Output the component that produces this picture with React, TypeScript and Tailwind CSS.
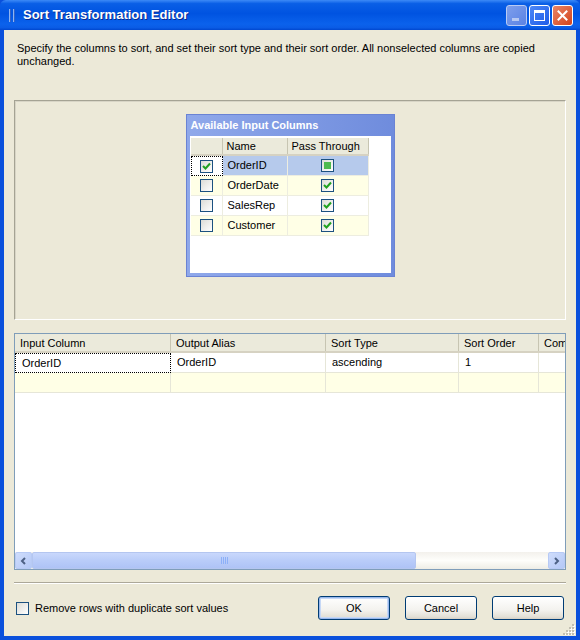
import React from "react";

const Check = ({ checked = false, square = false }: { checked?: boolean; square?: boolean }) => (
  <div className="w-[13px] h-[13px] border border-[#1C5180] bg-[linear-gradient(135deg,#DCDCD7,#FFFFFF)] flex items-center justify-center">
    {checked && (
      <svg width="9" height="9" viewBox="0 0 9 9">
        <polyline points="1,4 3.5,6.5 8,1.5" fill="none" stroke="#21A121" strokeWidth="2" />
      </svg>
    )}
    {square && <div className="w-[7px] h-[7px] bg-[#4EBA4E]" />}
  </div>
);

const XpButton = ({ label, isDefault = false }: { label: string; isDefault?: boolean }) => (
  <button
    className={`w-[72px] h-[24px] rounded-[3px] border border-[#003C74] bg-[linear-gradient(to_bottom,#FFFFFF,#F3F2EE_60%,#E3E0D6_90%,#D6D0C5)] text-[11px] text-black ${
      isDefault ? "shadow-[inset_0_0_0_1px_#98B8EC,inset_0_0_0_2px_#C6D8F6]" : ""
    }`}
  >
    {label}
  </button>
);

const avail = [
  { name: "OrderID", sel: true, bg: "bg-white" },
  { name: "OrderDate", bg: "bg-[#FFFFE6]" },
  { name: "SalesRep", bg: "bg-white" },
  { name: "Customer", bg: "bg-[#FFFFE6]" },
];

const cols = [
  { t: "Input Column", w: "w-[156px]" },
  { t: "Output Alias", w: "w-[155px]" },
  { t: "Sort Type", w: "w-[133px]" },
  { t: "Sort Order", w: "w-[80px]" },
  { t: "Comparison Flags", w: "w-[120px]" },
];

const row1 = ["OrderID", "OrderID", "ascending", "1", ""];

export default function App() {
  return (
    <div className="w-[580px] h-[640px] flex flex-col bg-[#0A50DC] font-['Liberation_Sans',Arial,sans-serif] text-[11px] text-black overflow-hidden select-none">
      {/* title bar */}
      <div className="h-[30px] shrink-0 flex items-center bg-[linear-gradient(to_bottom,#3D8AF7_0%,#0A5FE6_12%,#0053E1_45%,#0B62EC_80%,#0A5CE6_92%,#0047CF_100%)] rounded-t-[6px] pl-[9px] pr-[7px]">
        <div className="flex gap-[2px] mr-[8px] mt-[1px]">
          <div className="w-[2px] h-[13px] bg-[#8FB4F0] border-r border-[#2F62C8]" />
          <div className="w-[2px] h-[13px] bg-[#8FB4F0] border-r border-[#2F62C8]" />
        </div>
        <span className="text-white font-bold text-[13px] [text-shadow:1px_1px_0_#0A2A8C]">
          Sort Transformation Editor
        </span>
        <div className="ml-auto flex gap-[2px]">
          <div className="w-[21px] h-[21px] rounded-[3px] border border-[#B9CBF4] bg-[linear-gradient(135deg,#7E9FEC,#5A82E4)] flex items-end pl-[5px] pb-[4px]">
            <div className="w-[7px] h-[3px] bg-[#B6C8F2]" />
          </div>
          <div className="w-[21px] h-[21px] rounded-[3px] border border-white bg-[linear-gradient(135deg,#4E88F7,#1E5CE8)] flex items-center justify-center">
            <div className="w-[11px] h-[11px] border border-white border-t-[3px]" />
          </div>
          <div className="w-[21px] h-[21px] rounded-[3px] border border-white bg-[linear-gradient(135deg,#E98567,#D4431B)] flex items-center justify-center">
            <svg width="11" height="11" viewBox="0 0 11 11">
              <path d="M1.5 1.5 L9.5 9.5 M9.5 1.5 L1.5 9.5" stroke="white" strokeWidth="2" strokeLinecap="square" />
            </svg>
          </div>
        </div>
      </div>

      {/* body */}
      <div className="flex-1 mx-[4px] mb-[4px] bg-[#ECE9D8] flex flex-col px-[10px] relative">
        <p className="mt-[12px] pl-[3px] leading-[13px] pr-[20px]">
          Specify the columns to sort, and set their sort type and their sort order. All nonselected columns are copied
          unchanged.
        </p>

        {/* upper panel */}
        <div className="mt-[32px] h-[220px] shrink-0 border-t border-l border-[#A5A394] border-b border-r border-b-white border-r-white shadow-[inset_1px_1px_0_#D8D5C6] flex justify-center">
          <div className="mt-[13px] w-[209px] h-[163px] bg-[linear-gradient(to_right,#8FA8EA,#6F8CDD)] border border-[#6A83D4] flex flex-col px-[3px] pb-[3px]">
            <div className="h-[21px] shrink-0 flex items-center pl-[1px] text-white font-bold text-[11px]">
              Available Input Columns
            </div>
            <div className="flex-1 bg-white pt-[2px] pl-[1px]">
              <div className="flex h-[18px] w-[178px] bg-[#EBEADB] border-b-2 border-[#D6D2C2]">
                <div className="w-[32px] border-r border-[#C7C5B2]" />
                <div className="w-[65px] border-r border-[#C7C5B2] pl-[4px] leading-[16px]">Name</div>
                <div className="w-[81px] border-r border-[#C7C5B2] pl-[4px] leading-[16px]">Pass Through</div>
              </div>
              {avail.map((r) => (
                <div key={r.name} className={`flex h-[20px] w-[178px] ${r.bg}`}>
                  <div
                    className={`w-[32px] flex items-center justify-center ${
                      r.sel ? "border border-dotted border-black" : "border-r border-b border-[#EDEDE0]"
                    }`}
                  >
                    <Check checked={r.sel} />
                  </div>
                  <div
                    className={`w-[65px] pl-[5px] flex items-center border-r border-b border-[#EDEDE0] ${
                      r.sel ? "bg-[#B6CAEC]" : ""
                    }`}
                  >
                    {r.name}
                  </div>
                  <div
                    className={`w-[81px] flex items-center justify-center border-r border-b border-[#EDEDE0] ${
                      r.sel ? "bg-[#B6CAEC]" : ""
                    }`}
                  >
                    {r.sel ? <Check square /> : <Check checked />}
                  </div>
                </div>
              ))}
            </div>
          </div>
        </div>

        {/* lower grid */}
        <div className="mt-[13px] h-[237px] shrink-0 border border-[#7F9DB9] bg-white flex flex-col overflow-hidden">
          <div className="flex h-[19px] shrink-0 bg-[#EBEADB] border-b-2 border-[#D6D2C2]">
            {cols.map((c) => (
              <div key={c.t} className={`${c.w} shrink-0 pl-[5px] leading-[18px] border-r border-[#C7C5B2] whitespace-nowrap`}>
                {c.t}
              </div>
            ))}
          </div>
          <div className="flex h-[20px] shrink-0">
            {row1.map((v, i) => (
              <div
                key={i}
                className={`${cols[i].w} shrink-0 pl-[6px] flex items-center ${
                  i === 0 ? "border border-dotted border-black" : "border-r border-b border-[#E6E6D8]"
                }`}
              >
                {v}
              </div>
            ))}
          </div>
          <div className="flex h-[20px] shrink-0 bg-[#FFFFE6]">
            {cols.map((c) => (
              <div key={c.t} className={`${c.w} shrink-0 border-r border-b border-[#E6E6D8]`} />
            ))}
          </div>
          <div className="flex-1" />
          {/* horizontal scrollbar */}
          <div className="h-[17px] shrink-0 flex bg-[linear-gradient(to_bottom,#F3F1EC,#FEFEFB_50%,#EEEDE5)]">
            <div className="w-[17px] h-[17px] rounded-[2px] border border-[#B7CAF5] bg-[linear-gradient(135deg,#CFDDFC,#B4C8F6)] flex items-center justify-center">
              <svg width="7" height="8" viewBox="0 0 7 8">
                <path d="M5 1 L2 4 L5 7" fill="none" stroke="#4D6185" strokeWidth="2" />
              </svg>
            </div>
            <div className="w-[384px] h-[17px] rounded-[2px] border border-[#B4C6F0] bg-[linear-gradient(to_bottom,#C9D8FC,#B9CCF9_50%,#AEC3F6)] flex items-center justify-center">
              <div className="flex gap-[1px]">
                {[0, 1, 2, 3].map((k) => (
                  <div key={k} className="w-[1px] h-[7px] bg-[#EEF4FE] border-r border-[#8CB0F8]" />
                ))}
              </div>
            </div>
            <div className="flex-1" />
            <div className="w-[17px] h-[17px] rounded-[2px] border border-[#B7CAF5] bg-[linear-gradient(135deg,#CFDDFC,#B4C8F6)] flex items-center justify-center">
              <svg width="7" height="8" viewBox="0 0 7 8">
                <path d="M2 1 L5 4 L2 7" fill="none" stroke="#4D6185" strokeWidth="2" />
              </svg>
            </div>
          </div>
        </div>

        {/* separator */}
        <div className="mt-[12px] h-[2px] shrink-0 border-t border-[#ACA899] border-b border-b-white" />

        {/* bottom row */}
        <div className="mt-[12px] flex items-center">
          <div className="flex items-center pl-[2px]">
            <Check />
            <span className="ml-[6px]">Remove rows with duplicate sort values</span>
          </div>
          <div className="ml-auto flex gap-[15px] mr-[2px]">
            <XpButton label="OK" isDefault />
            <XpButton label="Cancel" />
            <XpButton label="Help" />
          </div>
        </div>

        {/* resize grip */}
        <svg className="absolute right-[1px] bottom-[1px]" width="12" height="12" viewBox="0 0 12 12">
          {[
            [9, 1],
            [6, 4],
            [9, 4],
            [3, 7],
            [6, 7],
            [9, 7],
            [0, 10],
            [3, 10],
            [6, 10],
            [9, 10],
          ].map(([x, y], i) => (
            <g key={i}>
              <rect x={x + 1} y={y + 1} width="2" height="2" fill="#FFFFFF" />
              <rect x={x} y={y} width="2" height="2" fill="#C2BFB2" />
            </g>
          ))}
        </svg>
      </div>
    </div>
  );
}
